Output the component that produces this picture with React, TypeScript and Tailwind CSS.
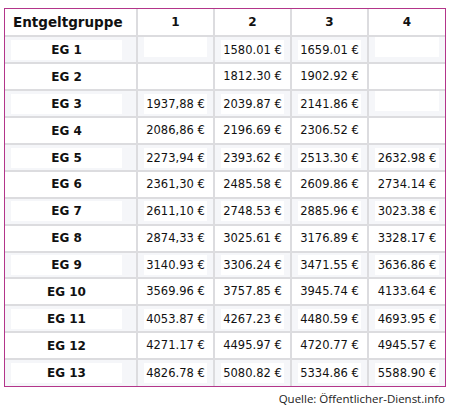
import React from "react";

const rows: [string, string, string, string, string][] = [
  ["EG 1", "", "1580.01 €", "1659.01 €", ""],
  ["EG 2", "", "1812.30 €", "1902.92 €", ""],
  ["EG 3", "1937,88 €", "2039.87 €", "2141.86 €", ""],
  ["EG 4", "2086,86 €", "2196.69 €", "2306.52 €", ""],
  ["EG 5", "2273,94 €", "2393.62 €", "2513.30 €", "2632.98 €"],
  ["EG 6", "2361,30 €", "2485.58 €", "2609.86 €", "2734.14 €"],
  ["EG 7", "2611,10 €", "2748.53 €", "2885.96 €", "3023.38 €"],
  ["EG 8", "2874,33 €", "3025.61 €", "3176.89 €", "3328.17 €"],
  ["EG 9", "3140.93 €", "3306.24 €", "3471.55 €", "3636.86 €"],
  ["EG 10", "3569.96 €", "3757.85 €", "3945.74 €", "4133.64 €"],
  ["EG 11", "4053.87 €", "4267.23 €", "4480.59 €", "4693.95 €"],
  ["EG 12", "4271.17 €", "4495.97 €", "4720.77 €", "4945.57 €"],
  ["EG 13", "4826.78 €", "5080.82 €", "5334.86 €", "5588.90 €"],
];

export default function App() {
  return (
    <div className="w-[450px] h-[406px] bg-white pt-[8px] pl-[4px]" style={{ fontFamily: '"DejaVu Sans", Verdana, sans-serif' }}>
      <div className="w-[442px] border border-[#b3358a]">
        <table className="w-full border-collapse table-fixed text-[#111]">
          <colgroup>
            <col className="w-[132px]" />
            <col className="w-[77px]" />
            <col className="w-[77px]" />
            <col className="w-[77px]" />
            <col />
          </colgroup>
          <thead>
            <tr className="h-[27px]">
              <th className="border-r-2 border-b-2 border-[#dcdcdf] text-left pl-[8px] text-[13.5px] font-bold">Entgeltgruppe</th>
              {["1", "2", "3", "4"].map((h, i) => (
                <th key={h} className={`border-b-2 border-[#dcdcdf] text-center text-[12px] font-bold ${i < 3 ? "border-r-2" : ""}`}>{h}</th>
              ))}
            </tr>
          </thead>
          <tbody>
            {rows.map((r, ri) => {
              const shaded = ri % 2 === 0;
              const last = ri === rows.length - 1;
              return (
                <tr key={r[0]} className={`h-[26.85px] ${shaded ? "bg-[#f5f6f9]" : "bg-white"}`}>
                  {r.map((c, ci) => (
                    <td
                      key={ci}
                      className={`text-center px-[6px] ${ci === 0 ? "font-bold text-[12px] pr-[14px]" : "text-[11.5px]"} ${ci < 4 ? "border-r-2" : ""} ${last ? "" : "border-b-2"} border-[#dcdcdf]`}
                    >
                      {shaded ? (
                        <span className="inline-block bg-white leading-[20px] w-full min-h-[20px]">{c}</span>
                      ) : (
                        c
                      )}
                    </td>
                  ))}
                </tr>
              );
            })}
          </tbody>
        </table>
      </div>
      <div className="w-[442px] text-right text-[11.5px] text-[#222] mt-[3px] pr-[1px]" style={{ fontFamily: '"Open Sans", sans-serif' }}>
        Quelle: Öffentlicher-Dienst.info
      </div>
    </div>
  );
}
